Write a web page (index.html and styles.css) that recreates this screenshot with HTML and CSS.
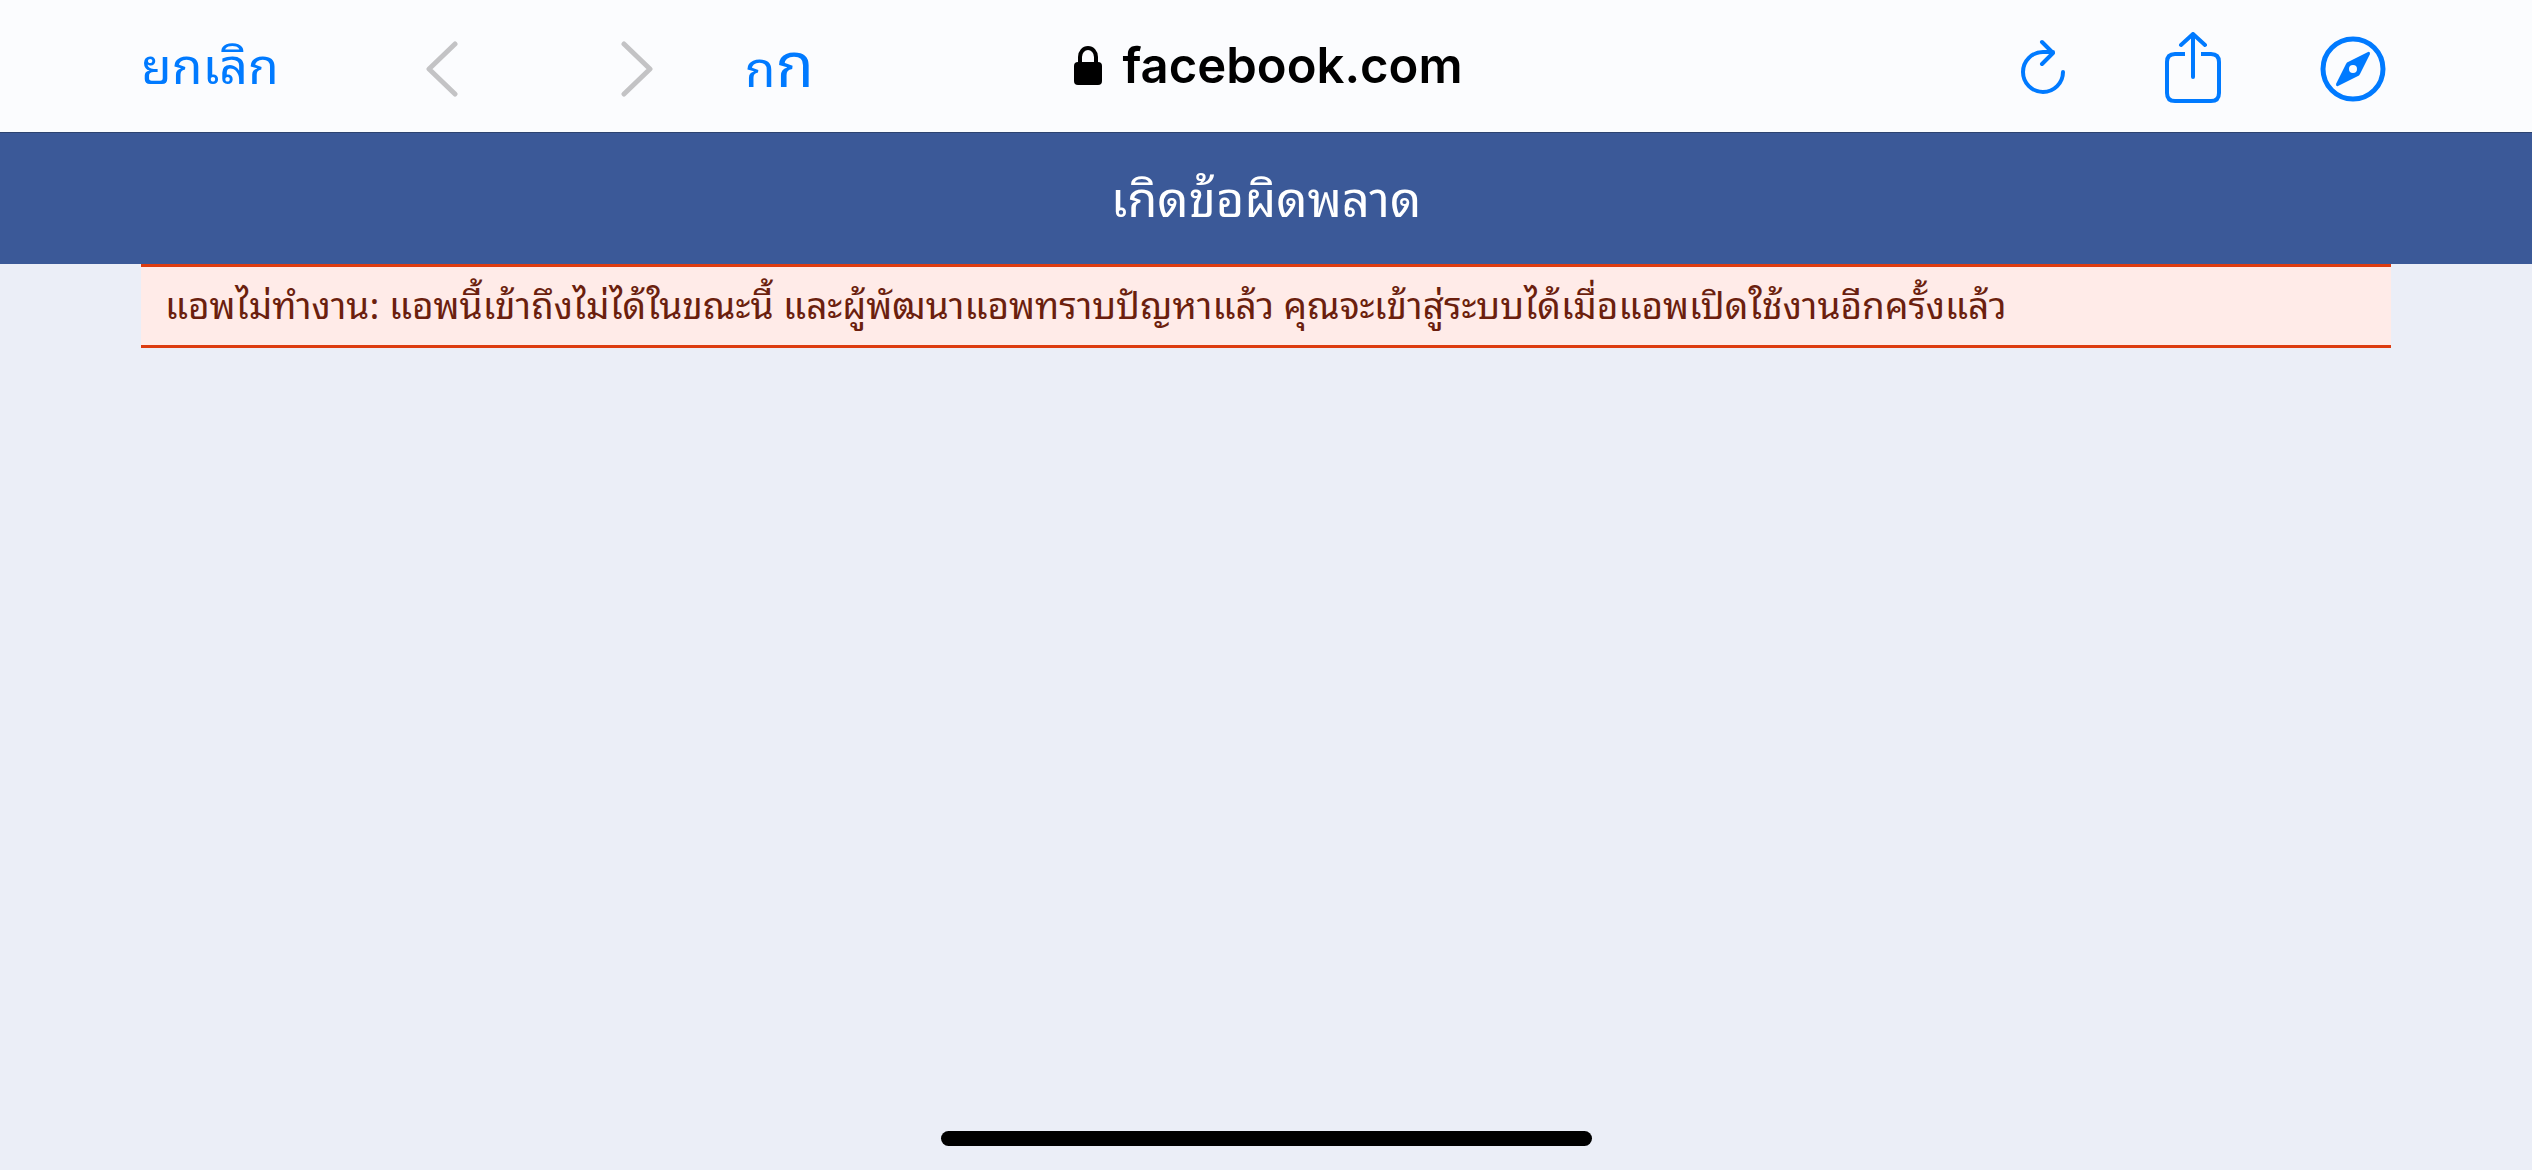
FILE: index.html
```html
<!DOCTYPE html>
<html lang="th">
<head>
    <meta charset="UTF-8">
    <meta name="viewport" content="width=device-width, initial-scale=1">
    <title>เกิดข้อผิดพลาด</title>
    <link rel="stylesheet" href="styles.css">
</head>
<body>
    <nav class="toolbar">
        <div class="toolbar-left">
            <button class="cancel" type="button">ยกเลิก</button>
            <div class="history">
                <button type="button" aria-label="ย้อนกลับ" disabled>
                    <svg width="32" height="56" viewBox="0 0 32 56"><path d="M29 3 3 28 29 53"/></svg>
                </button>
                <button type="button" aria-label="ถัดไป" disabled>
                    <svg width="32" height="56" viewBox="0 0 32 56"><path d="M3 3 29 28 3 53"/></svg>
                </button>
            </div>
            <button class="text-size" type="button"><span class="small">ก</span><span class="large">ก</span></button>
        </div>

        <div class="address">
            <svg width="28" height="40" viewBox="0 0 28 40">
                <path class="shackle" d="M6 18V11a8 9 0 0 1 16 0v7"/>
                <rect x="0" y="16" width="28" height="23" rx="4"/>
            </svg>
            <span>facebook.com</span>
        </div>

        <div class="toolbar-right">
            <button type="button" aria-label="โหลดใหม่">
                <svg width="46" height="66" viewBox="0 0 46 66">
                    <path d="M43 36A20 20 0 1 1 23 16H33M22 6 33 17 22 28"/>
                </svg>
            </button>
            <button type="button" aria-label="แชร์">
                <svg width="58" height="74" viewBox="0 0 58 74">
                    <path class="butt" d="M21 22H11Q3 22 3 30V61Q3 69 11 69H47Q55 69 55 61V30Q55 22 47 22H37"/>
                    <path d="M29 45V2M17 13 29 2 41 13"/>
                </svg>
            </button>
            <button type="button" aria-label="เปิดใน Safari">
                <svg width="66" height="66" viewBox="0 0 66 66">
                    <circle class="ring" cx="33" cy="33" r="30"/>
                    <path class="needle" d="M48 16 28 26Q27 26 26 28L16 48Q16 51 18 50L38 40Q39 40 40 38L50 18Q50 15 48 16ZM33 29a4 4 0 1 0 0 8 4 4 0 0 0 0-8Z"/>
                </svg>
            </button>
        </div>
    </nav>

    <header class="page-header">
        <h1>เกิดข้อผิดพลาด</h1>
    </header>

    <main>
        <p class="error">แอพไม่ทำงาน: แอพนี้เข้าถึงไม่ได้ในขณะนี้ และผู้พัฒนาแอพทราบปัญหาแล้ว คุณจะเข้าสู่ระบบได้เมื่อแอพเปิดใช้งานอีกครั้งแล้ว</p>
    </main>

    <div class="home-indicator"></div>
</body>
</html>
```
FILE: styles.css
```css
:root {
    --ios-blue: #007aff;
    --fb-blue: #3b5998;
    --thai: "Noto Sans Thai Looped", "Loma", "Garuda", "Waree", "Noto Sans Thai", "Noto Sans", sans-serif;
}

* {
    box-sizing: border-box;
}

body {
    margin: 0;
    min-height: 100vh;
    display: flex;
    flex-direction: column;
    background: #ebeef7;
    font-family: var(--thai);
}

button {
    display: flex;
    padding: 0;
    border: 0;
    background: none;
    color: var(--ios-blue);
    font-family: inherit;
    cursor: pointer;
}

button:disabled {
    color: #c3c3c5;
    cursor: default;
}

button svg {
    fill: none;
    stroke: currentColor;
    stroke-width: 5;
    stroke-linecap: round;
    stroke-linejoin: round;
}

.toolbar-right svg {
    stroke-width: 4;
}

/* browser bar */
.toolbar {
    display: grid;
    grid-template-columns: 1fr auto 1fr;
    align-items: center;
    height: 133px;
    padding: 0 146px 0 141px;
    background: #fbfcfe;
    border-bottom: 1px solid #2c4370;
}

.toolbar-left,
.toolbar-right,
.history {
    display: flex;
    align-items: center;
}

.toolbar-left {
    gap: 92px;
}

.history {
    gap: 163px;
    margin-left: 55px;
    padding-top: 5px;
}

.toolbar-right {
    justify-content: flex-end;
    gap: 98px;
    padding-top: 5px;
}

.cancel,
.text-size {
    padding-bottom: 8px;
    font-size: 50px;
    line-height: 72px;
}

.text-size {
    align-items: baseline;
}

.large {
    font-size: 62px;
}

.address {
    display: flex;
    align-items: center;
    gap: 20px;
    margin-left: 10px;
    font: 600 49px/72px Inter, sans-serif;
}

.shackle {
    fill: none;
    stroke: #000;
    stroke-width: 4;
}

.toolbar-right .butt {
    stroke-linecap: butt;
}

.toolbar-right .ring {
    stroke-width: 5;
}

.toolbar-right .needle {
    fill: currentColor;
    fill-rule: evenodd;
    stroke: none;
}

/* page */
.page-header {
    padding: 26px 144px 33px;
    background: var(--fb-blue);
    color: #fff;
    text-align: center;
}

.page-header h1 {
    margin: 0;
    font-size: 49px;
    font-weight: 400;
    line-height: 72px;
}

main {
    flex: 1;
    padding: 0 141px;
}

.error {
    margin: 0;
    padding: 9px 24px 15px;
    background: #ffebe8;
    border-top: 3px solid #dd3c10;
    border-bottom: 3px solid #dd3c10;
    color: #6b1f0e;
    font-size: 37px;
    line-height: 54px;
}

.home-indicator {
    width: 651px;
    height: 15px;
    margin: 0 auto 24px;
    border-radius: 8px;
    background: #000;
}
```
